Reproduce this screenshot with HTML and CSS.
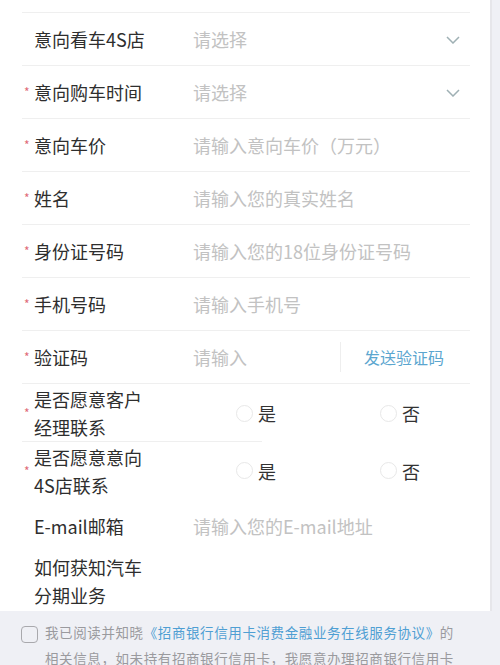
FILE: index.html
```html
<!DOCTYPE html>
<html lang="zh">
<head>
<meta charset="utf-8">
<link rel="stylesheet" href="styles.css">
</head>
<body>
<div class="card">
  <div class="row first">
    <span class="star"></span>
    <span class="label">意向看车4S店</span>
    <span class="ph grow">请选择</span>
    <svg class="chev" width="14" height="8" viewBox="0 0 14 8"><path d="M1 1 L7 7 L13 1" fill="none" stroke="#9fb0b4" stroke-width="1.5"/></svg>
  </div>
  <div class="row">
    <span class="star">*</span>
    <span class="label">意向购车时间</span>
    <span class="ph grow">请选择</span>
    <svg class="chev" width="14" height="8" viewBox="0 0 14 8"><path d="M1 1 L7 7 L13 1" fill="none" stroke="#9fb0b4" stroke-width="1.5"/></svg>
  </div>
  <div class="row">
    <span class="star">*</span>
    <span class="label">意向车价</span>
    <span class="ph">请输入意向车价（万元）</span>
  </div>
  <div class="row">
    <span class="star">*</span>
    <span class="label">姓名</span>
    <span class="ph">请输入您的真实姓名</span>
  </div>
  <div class="row">
    <span class="star">*</span>
    <span class="label">身份证号码</span>
    <span class="ph">请输入您的18位身份证号码</span>
  </div>
  <div class="row">
    <span class="star">*</span>
    <span class="label">手机号码</span>
    <span class="ph">请输入手机号</span>
  </div>
  <div class="row">
    <span class="star">*</span>
    <span class="label">验证码</span>
    <span class="ph code-input">请输入</span>
    <span class="sep"></span>
    <span class="send">发送验证码</span>
  </div>
  <div class="row tall half-line">
    <span class="star">*</span>
    <span class="label two">是否愿意客户<br>经理联系</span>
    <div class="radios">
      <span class="opt"><span class="circle"></span>是</span>
      <span class="opt"><span class="circle"></span>否</span>
    </div>
  </div>
  <div class="row tall2 noline">
    <span class="star">*</span>
    <span class="label two">是否愿意意向<br>4S店联系</span>
    <div class="radios">
      <span class="opt"><span class="circle"></span>是</span>
      <span class="opt"><span class="circle"></span>否</span>
    </div>
  </div>
  <div class="row email noline">
    <span class="star"></span>
    <span class="label">E-mail邮箱</span>
    <span class="ph">请输入您的E-mail地址</span>
  </div>
  <div class="row last noline">
    <span class="star"></span>
    <span class="label two">如何获知汽车<br>分期业务</span>
  </div>
</div>
<div class="agree">
  <span class="check"></span>
  <p class="agree-text">我已阅读并知晓<span class="link">《招商银行信用卡消费金融业务在线服务协议》</span>的相关信息，如未持有招商银行信用卡，我愿意办理招商银行信用卡</p>
</div>
</body>
</html>
```
FILE: styles.css
```css
* { box-sizing: border-box; }
html, body {
  margin: 0;
  padding: 0;
}
body {
  width: 500px;
  height: 665px;
  overflow: hidden;
  background: #eff0f5;
  font-family: "Noto Sans CJK SC", "Noto Sans", sans-serif;
  color: #333;
}
.card {
  width: 492px;
  background: #fff;
  border-right: 2px solid #e6e6ea;
  padding-top: 12px;
  height: 611px;
}
.row {
  display: flex;
  align-items: center;
  height: 53px;
  margin: 0 20px 0 22px;
  border-bottom: 1px solid #efefef;
  position: relative;
}
.row.first { border-top: 1px solid #efefef; height: 54px; }
.row.noline { border-bottom: none; }
.row.tall { height: 58px; }
.row.tall2 { height: 57px; }
.row.half-line { border-bottom: none; }
.row.half-line::after {
  content: "";
  position: absolute;
  left: 0;
  bottom: 0;
  width: 240px;
  height: 1px;
  background: #efefef;
}
.row.email { height: 53px; }
.row.last { height: 58px; }
.star {
  width: 12px;
  flex: none;
  color: #e06a78;
  font-size: 12px;
  padding-left: 2px;
  line-height: 1;
}
.label {
  width: 159px;
  flex: none;
  font-size: 18px;
  color: #2e2e2e;
  line-height: 28px;
  white-space: nowrap;
}
.ph {
  font-size: 18px;
  color: #c2c2c2;
  white-space: nowrap;
}
.grow { flex: 1; }
.chev { margin-right: 10px; margin-top: 2px; }
.code-input { flex: 1; }
.sep {
  width: 1px;
  height: 30px;
  background: #eeeeee;
  margin-right: 23px;
}
.send {
  font-size: 16px;
  color: #5ba6cf;
  margin-right: 26px;
}
.radios {
  display: flex;
  padding-left: 43px;
}
.opt {
  width: 144px;
  display: flex;
  align-items: center;
  font-size: 18px;
  color: #333;
}
.circle {
  width: 17px;
  height: 17px;
  border-radius: 50%;
  border: 1px solid #e8e8e8;
  margin-right: 5px;
}
.agree {
  display: flex;
  align-items: flex-start;
  padding: 8px 38px 0 21px;
}
.check {
  width: 17px;
  height: 17px;
  border: 1.5px solid #a9a9ad;
  border-radius: 4px;
  margin-top: 7px;
  flex: none;
}
.agree-text {
  margin: 0 0 0 7px;
  font-size: 13.5px;
  line-height: 26px;
  color: #9a9a9e;
  letter-spacing: 0.6px;
}
.link { color: #4f9fd3; }
```
